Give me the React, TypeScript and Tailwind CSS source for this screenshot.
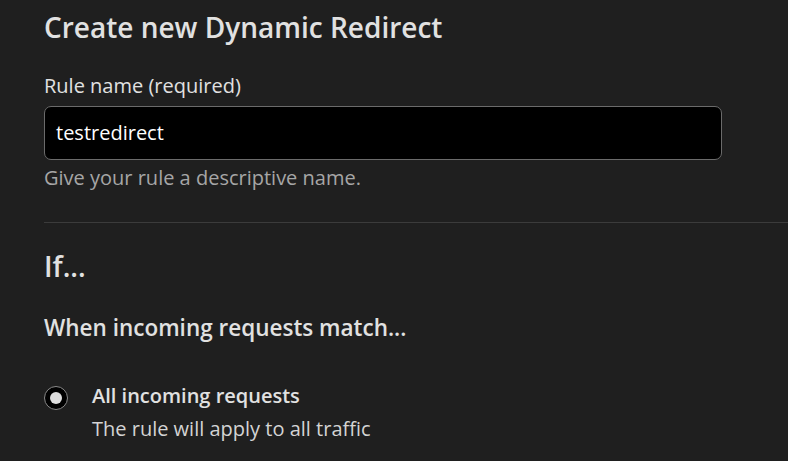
export default function App() {
  return (
    <div
      className="min-h-[461px] w-full bg-[#1f1f1f] pl-[44px] text-[#e1e1e1]"
      style={{ fontFamily: '"Open Sans", "Noto Sans", sans-serif' }}
    >
      <h1 className="pt-[8px] text-[28px] font-semibold leading-[38px]">Create new Dynamic Redirect</h1>

      <div className="mt-[27px]">
        <label className="block text-[20px] leading-[26px]">Rule name (required)</label>
        <div className="mt-[7px] flex h-[54px] w-[678px] items-center rounded-[7px] border border-[#6b6b6b] bg-black px-[11px] text-[20px] leading-[26px] text-white">
          testredirect
        </div>
        <p className="mt-[5px] text-[20px] leading-[26px] text-[#a6a6a6]">Give your rule a descriptive name.</p>
      </div>

      <div className="mt-[31px] h-px bg-[#3b3b3b]" />

      <h2 className="mt-[24px] text-[28px] font-semibold leading-[38px]">If...</h2>

      <h3 className="mt-[28px] text-[22.5px] font-semibold leading-[30px]">When incoming requests match...</h3>

      <div className="mt-[40px] flex items-start gap-[24px]">
        <span className="mt-[3px] flex h-[24px] w-[24px] shrink-0 items-center justify-center rounded-full border border-[#8a8a8a] bg-black">
          <span className="h-[12px] w-[12px] rounded-full bg-[#dedede]" />
        </span>
        <div>
          <div className="text-[20px] font-semibold leading-[26px]">All incoming requests</div>
          <div className="mt-[7px] text-[20px] leading-[26px] text-[#d4d4d4]">The rule will apply to all traffic</div>
        </div>
      </div>
    </div>
  )
}
